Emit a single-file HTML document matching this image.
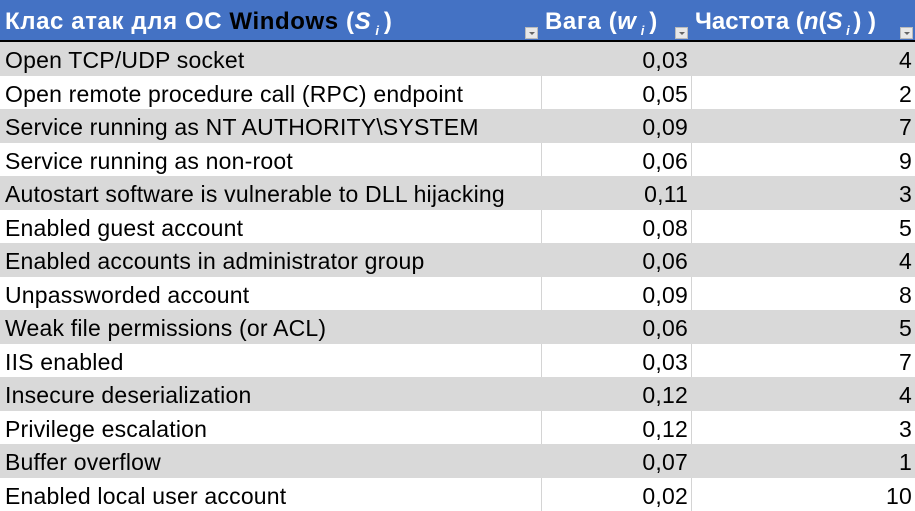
<!DOCTYPE html><html><head><meta charset="utf-8"><style>
body{margin:0;width:915px;height:511px;overflow:hidden;background:#fff;font-family:"Liberation Sans",sans-serif;position:relative}
.h{position:absolute;left:0;top:0;width:915px;height:40px;background:#4472C4;border-bottom:2px solid #000;color:#fff;font-weight:bold;font-size:24px;letter-spacing:0.6px}
.h span{position:absolute;top:8px;white-space:nowrap}
.dd{position:absolute;top:27px;width:13px;height:12px;background:#e8e8e8;border:1px solid #bbb;box-sizing:border-box}
.dd:after{content:"";position:absolute;left:3px;top:4px;border-left:3px solid transparent;border-right:3px solid transparent;border-top:3px solid #666}
.r{position:absolute;left:0;width:915px;height:33.5px;font-size:23px;color:#000}
.g{background:#D9D9D9}
.r .a{position:absolute;left:5px;top:5px;white-space:nowrap;letter-spacing:0.2px}
.r .b{position:absolute;right:227px;top:5px;letter-spacing:0.2px}
.r .c{position:absolute;right:3px;top:5px;letter-spacing:0.2px}
.w .v1,.w .v2{position:absolute;top:0;bottom:0;width:1px;background:#d4d4d4}
.v1{left:541px}.v2{left:691px}
i{font-style:italic}
</style></head><body>
<div class="h">
<span style="left:5px">Клас атак для ОС <span style="position:static;color:#000">Windows</span> (<i>S<sub style="font-size:13px"> i </sub></i>)</span>
<div class="dd" style="left:525px"></div>
<span style="left:545px">Вага (<i>w<sub style="font-size:13px"> i </sub></i>)</span>
<div class="dd" style="left:675px"></div>
<span style="left:695px;letter-spacing:0">Частота (<i>n</i>(<i>S<sub style="font-size:13px"> i </sub></i>) )</span>
<div class="dd" style="left:900px"></div>
</div>
<div id="rows"></div>
<script>
const d=[["Open TCP/UDP socket","0,03","4"],["Open remote procedure call (RPC) endpoint","0,05","2"],["Service running as NT AUTHORITY\\SYSTEM","0,09","7"],["Service running as non-root","0,06","9"],["Autostart software is vulnerable to DLL hijacking","0,11","3"],["Enabled guest account","0,08","5"],["Enabled accounts in administrator group","0,06","4"],["Unpassworded account","0,09","8"],["Weak file permissions (or ACL)","0,06","5"],["IIS enabled","0,03","7"],["Insecure deserialization","0,12","4"],["Privilege escalation","0,12","3"],["Buffer overflow","0,07","1"],["Enabled local user account","0,02","10"]];
let h="";d.forEach((r,i)=>{h+=`<div class="r ${i%2?'w':'g'}" style="top:${42+i*33.5}px"><div class="v1"></div><div class="v2"></div><span class="a">${r[0]}</span><span class="b">${r[1]}</span><span class="c">${r[2]}</span></div>`});
document.getElementById("rows").innerHTML=h;
</script>
</body></html>
